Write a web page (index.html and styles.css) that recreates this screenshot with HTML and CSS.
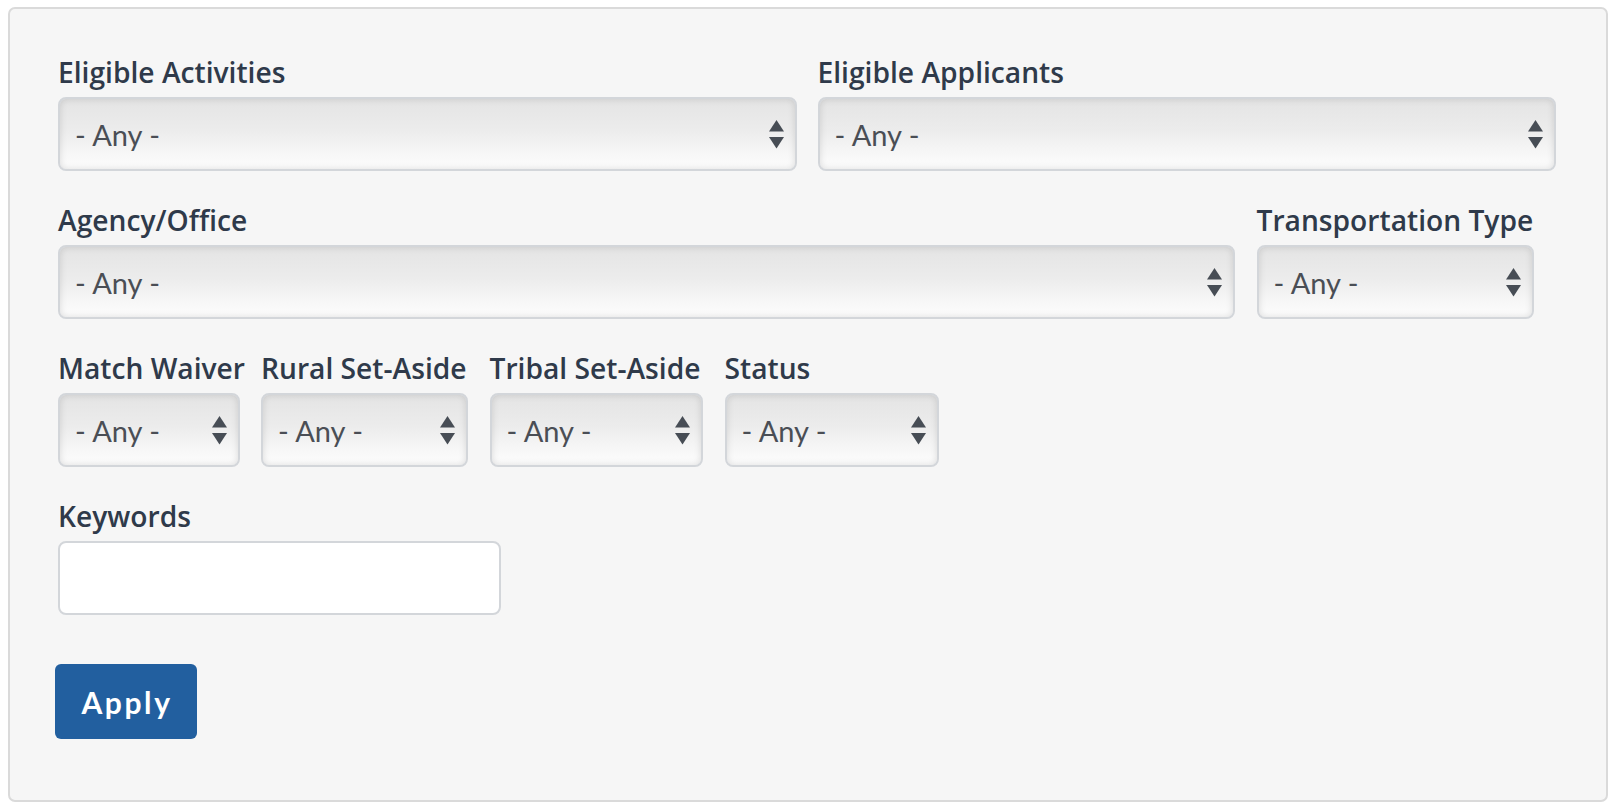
FILE: index.html
```html
<!DOCTYPE html>
<html lang="en">
<head>
<meta charset="utf-8">
<title>Filters</title>
<link rel="stylesheet" href="styles.css">
</head>
<body>
<form class="filter-box">
  <div class="row row-two">
    <div class="field">
      <label class="field-label">Eligible Activities</label>
      <div class="select-wrap">
        <select class="select"><option>- Any -</option></select>
        <span class="arrows"><svg width="15" height="29" viewBox="0 0 15 29"><path d="M7.5 0 L15 11.5 L0 11.5 Z"/><path d="M0 17 L15 17 L7.5 28.5 Z"/></svg></span>
      </div>
    </div>
    <div class="field">
      <label class="field-label">Eligible Applicants</label>
      <div class="select-wrap">
        <select class="select"><option>- Any -</option></select>
        <span class="arrows"><svg width="15" height="29" viewBox="0 0 15 29"><path d="M7.5 0 L15 11.5 L0 11.5 Z"/><path d="M0 17 L15 17 L7.5 28.5 Z"/></svg></span>
      </div>
    </div>
  </div>

  <div class="row">
    <div class="field w-agency">
      <label class="field-label">Agency/Office</label>
      <div class="select-wrap">
        <select class="select"><option>- Any -</option></select>
        <span class="arrows"><svg width="15" height="29" viewBox="0 0 15 29"><path d="M7.5 0 L15 11.5 L0 11.5 Z"/><path d="M0 17 L15 17 L7.5 28.5 Z"/></svg></span>
      </div>
    </div>
    <div class="field w-transport">
      <label class="field-label">Transportation Type</label>
      <div class="select-wrap">
        <select class="select"><option>- Any -</option></select>
        <span class="arrows"><svg width="15" height="29" viewBox="0 0 15 29"><path d="M7.5 0 L15 11.5 L0 11.5 Z"/><path d="M0 17 L15 17 L7.5 28.5 Z"/></svg></span>
      </div>
    </div>
  </div>

  <div class="row">
    <div class="field w-match">
      <label class="field-label">Match Waiver</label>
      <div class="select-wrap">
        <select class="select"><option>- Any -</option></select>
        <span class="arrows"><svg width="15" height="29" viewBox="0 0 15 29"><path d="M7.5 0 L15 11.5 L0 11.5 Z"/><path d="M0 17 L15 17 L7.5 28.5 Z"/></svg></span>
      </div>
    </div>
    <div class="field w-rural">
      <label class="field-label">Rural Set-Aside</label>
      <div class="select-wrap">
        <select class="select"><option>- Any -</option></select>
        <span class="arrows"><svg width="15" height="29" viewBox="0 0 15 29"><path d="M7.5 0 L15 11.5 L0 11.5 Z"/><path d="M0 17 L15 17 L7.5 28.5 Z"/></svg></span>
      </div>
    </div>
    <div class="field w-tribal">
      <label class="field-label">Tribal Set-Aside</label>
      <div class="select-wrap">
        <select class="select"><option>- Any -</option></select>
        <span class="arrows"><svg width="15" height="29" viewBox="0 0 15 29"><path d="M7.5 0 L15 11.5 L0 11.5 Z"/><path d="M0 17 L15 17 L7.5 28.5 Z"/></svg></span>
      </div>
    </div>
    <div class="field w-status">
      <label class="field-label">Status</label>
      <div class="select-wrap">
        <select class="select"><option>- Any -</option></select>
        <span class="arrows"><svg width="15" height="29" viewBox="0 0 15 29"><path d="M7.5 0 L15 11.5 L0 11.5 Z"/><path d="M0 17 L15 17 L7.5 28.5 Z"/></svg></span>
      </div>
    </div>
  </div>

  <div class="row">
    <div class="field w-keywords">
      <label class="field-label">Keywords</label>
      <input class="text-input" type="text">
    </div>
  </div>

  <div class="actions">
    <button class="apply-btn" type="button">Apply</button>
  </div>
</form>
</body>
</html>
```
FILE: styles.css
```css
html, body {
  background: #ffffff;
}
body {
  margin: 7px 8px 8px 8px;
  font-family: Lato, "Liberation Sans", sans-serif;
}
.filter-box {
  box-sizing: border-box;
  width: 1600px;
  height: 795px;
  border: 2px solid #dadada;
  border-radius: 7px;
  background: #f6f6f6;
  padding: 45px 50px 0 48px;
  display: flex;
  flex-direction: column;
  gap: 31px;
}
.row {
  display: flex;
  gap: 21.5px;
}
.row-two {
  display: grid;
  grid-template-columns: 1fr 1fr;
  gap: 21px;
}
.field {
  display: flex;
  flex-direction: column;
}
.field-label {
  display: block;
  font-family: "Open Sans", Lato, sans-serif;
  font-size: 28.2px;
  line-height: 36px;
  font-weight: 600;
  color: #2f3a4a;
  margin-bottom: 7px;
  white-space: nowrap;
}
.w-agency { width: 1177px; }
.w-transport { width: 277px; }
.w-match { width: 181.5px; }
.w-rural { width: 207px; }
.w-tribal { width: 213.5px; }
.w-status { width: 214.5px; }
.w-keywords { width: 443px; }

.select-wrap {
  position: relative;
  height: 74px;
}
.select {
  -webkit-appearance: none;
  appearance: none;
  box-sizing: border-box;
  width: 100%;
  height: 74px;
  margin: 0;
  padding: 0 40px 0 15px;
  border: 2px solid #d3d6da;
  border-radius: 8px;
  background: linear-gradient(to bottom, #e4e4e4 0%, #ececec 45%, #f6f6f6 75%, #fdfdfd 100%);
  box-shadow: inset 0 0 7px rgba(0, 0, 0, 0.13);
  font-family: Lato, "Liberation Sans", sans-serif;
  font-size: 29px;
  color: #4a4e55;
  outline: none;
}
.arrows {
  position: absolute;
  right: 13px;
  top: 23px;
  width: 15px;
  height: 29px;
  display: block;
  pointer-events: none;
}
.arrows svg {
  display: block;
  fill: #474d55;
}
.text-input {
  box-sizing: border-box;
  width: 100%;
  height: 74px;
  margin: 0;
  border: 2px solid #d3d6da;
  border-radius: 8px;
  background: #ffffff;
  font-family: Lato, "Liberation Sans", sans-serif;
  font-size: 29px;
  padding: 0 16px;
  outline: none;
}
.actions {
  display: flex;
  padding-top: 18px;
}
.apply-btn {
  box-sizing: border-box;
  width: 142px;
  height: 75px;
  margin-left: -3px;
  border: none;
  border-radius: 6px;
  background: #225f9f;
  color: #ffffff;
  font-family: Lato, "Liberation Sans", sans-serif;
  font-size: 30px;
  font-weight: 700;
  letter-spacing: 2.6px;
  padding: 0 0 0 2px;
}
```
